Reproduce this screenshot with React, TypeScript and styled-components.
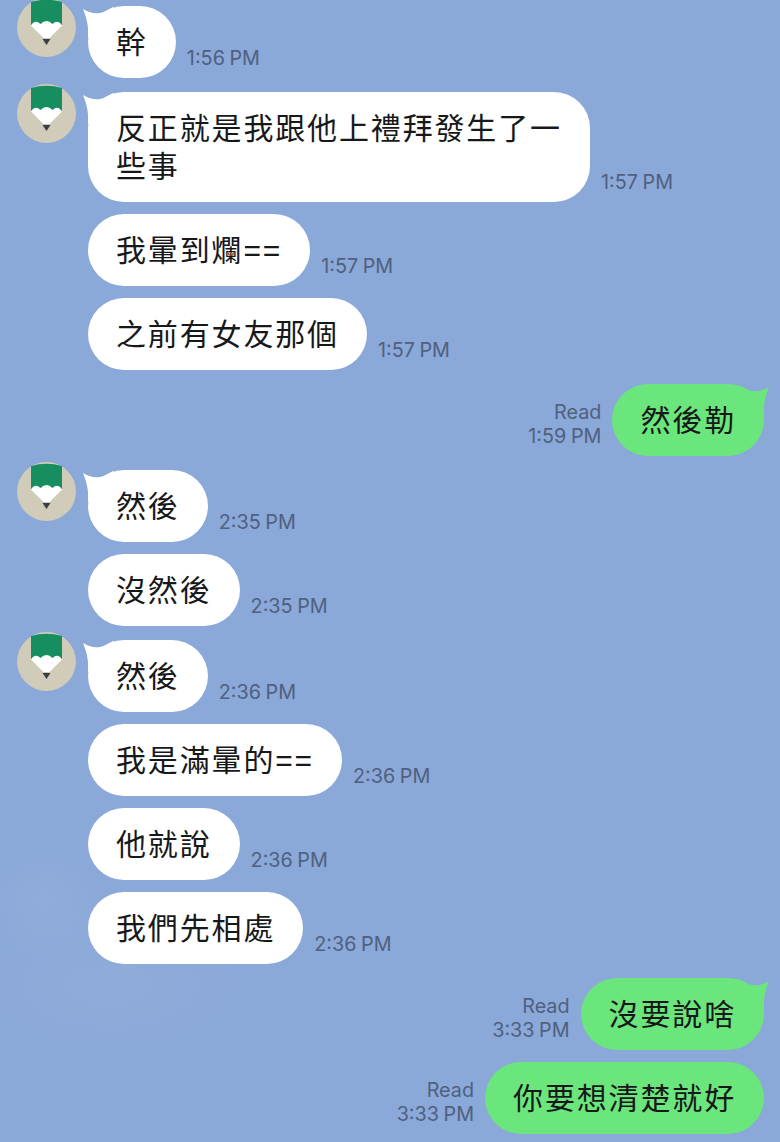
import styled, { createGlobalStyle } from 'styled-components';

interface Message {
  id: number,
  text: string,
  time: string,
  mine?: boolean,
  avatar?: boolean,
  tail?: boolean,
  gap: number
}

const messages: Message[] = [
  { id: 1, text: '幹', time: '1:56 PM', avatar: true, tail: true, gap: 6 },
  { id: 2, text: '反正就是我跟他上禮拜發生了一些事', time: '1:57 PM', avatar: true, tail: true, gap: 14 },
  { id: 3, text: '我暈到爛==', time: '1:57 PM', gap: 12 },
  { id: 4, text: '之前有女友那個', time: '1:57 PM', gap: 12 },
  { id: 5, text: '然後勒', time: '1:59 PM', mine: true, tail: true, gap: 14 },
  { id: 6, text: '然後', time: '2:35 PM', avatar: true, tail: true, gap: 14 },
  { id: 7, text: '沒然後', time: '2:35 PM', gap: 12 },
  { id: 8, text: '然後', time: '2:36 PM', avatar: true, tail: true, gap: 14 },
  { id: 9, text: '我是滿暈的==', time: '2:36 PM', gap: 12 },
  { id: 10, text: '他就說', time: '2:36 PM', gap: 12 },
  { id: 11, text: '我們先相處', time: '2:36 PM', gap: 12 },
  { id: 12, text: '沒要說啥', time: '3:33 PM', mine: true, tail: true, gap: 14 },
  { id: 13, text: '你要想清楚就好', time: '3:33 PM', mine: true, gap: 12 },
];

const GlobalStyle = createGlobalStyle`
  html, body {
    margin: 0;
    padding: 0;
    background: #8aa8d8;
  }
`

const Chat = styled.div`
  width: 780px;
  height: 1142px;
  overflow: hidden;
  background:
    radial-gradient(ellipse 70px 60px at 45px 900px, rgba(255, 255, 255, 0.05), transparent),
    radial-gradient(ellipse 190px 90px at 110px 985px, rgba(255, 255, 255, 0.04), transparent),
    #8aa8d8;
  display: flex;
  flex-direction: column;
  font-family: "Liberation Sans", "Noto Sans CJK TC", "Noto Sans", sans-serif;
`

const Row = styled.div<{ $mine?: boolean, $gap: number }>`
  display: flex;
  align-items: flex-start;
  flex-direction: ${props => props.$mine ? 'row-reverse' : 'row'};
  margin-top: ${props => props.$gap}px;
  padding: ${props => props.$mine ? '0 16px 0 0' : '0 0 0 17px'};
`

const AvatarSlot = styled.div`
  flex: none;
  width: 71px;
  height: 59px;
  margin-top: -8px;
`

const EmptySlot = styled.div`
  flex: none;
  width: 71px;
`

const Bubble = styled.div<{ $mine?: boolean }>`
  position: relative;
  flex: none;
  box-sizing: border-box;
  max-width: 502px;
  padding: 18px 28px 16px;
  border-radius: 36px;
  background: ${props => props.$mine ? '#6be67c' : '#ffffff'};
  color: #17181a;
  font-size: 30px;
  line-height: 38px;
  letter-spacing: 1.85px;
`

const TailMark = styled.svg<{ $mine?: boolean }>`
  position: absolute;
  top: 0;
  width: 32px;
  height: 34px;
  ${props => props.$mine ? 'right: -5px; transform: scaleX(-1);' : 'left: -5px;'}
`

const Meta = styled.div<{ $mine?: boolean }>`
  align-self: flex-end;
  margin: ${props => props.$mine ? '0 11px 8px 0' : '0 0 8px 11px'};
  color: #50607f;
  font-family: Inter, "Liberation Sans", sans-serif;
  font-size: 19.8px;
  line-height: 24px;
  word-spacing: -1px;
  text-align: right;
  white-space: nowrap;
`

const Avatar = () => (
  <svg width="59" height="59" viewBox="0 0 59 59">
    <circle cx="29.5" cy="29.5" r="29.5" fill="#d1ccb9" />
    <path d="M14 4 Q29.5 -0.5 45 4 V27 H14 Z" fill="#178e5f" />
    <path d="M14 27.5 Q18 21 23.5 26 Q29.5 20 35.5 26 Q41 21 45 27.5 L32.5 40 H26.5 Z" fill="#ffffff" />
    <path d="M25.5 41 H33.5 L29.5 47 Z" fill="#3a4048" />
  </svg>
)

const Tail = ({ mine }: { mine?: boolean }) => (
  <TailMark $mine={mine} viewBox="0 0 32 34">
    <path
      d="M0 3 C7 7 12 8 17 7 C22 6 26 3 31 0.5 L20 20 L5 32 C5 24 6 18 0 3 Z"
      fill={mine ? '#6be67c' : '#ffffff'}
    />
  </TailMark>
)

const App = () => {
  return (
    <Chat>
      <GlobalStyle />
      {messages.map(msg => {
        return (
          <Row key={msg.id} $mine={msg.mine} $gap={msg.gap}>
            {!msg.mine && (msg.avatar ? <AvatarSlot><Avatar /></AvatarSlot> : <EmptySlot />)}
            <Bubble $mine={msg.mine}>
              {msg.tail && <Tail mine={msg.mine} />}
              {msg.text}
            </Bubble>
            <Meta $mine={msg.mine}>
              {msg.mine && <div>Read</div>}
              {msg.time}
            </Meta>
          </Row>
        )
      })}
    </Chat>
  );
}

export default App;
